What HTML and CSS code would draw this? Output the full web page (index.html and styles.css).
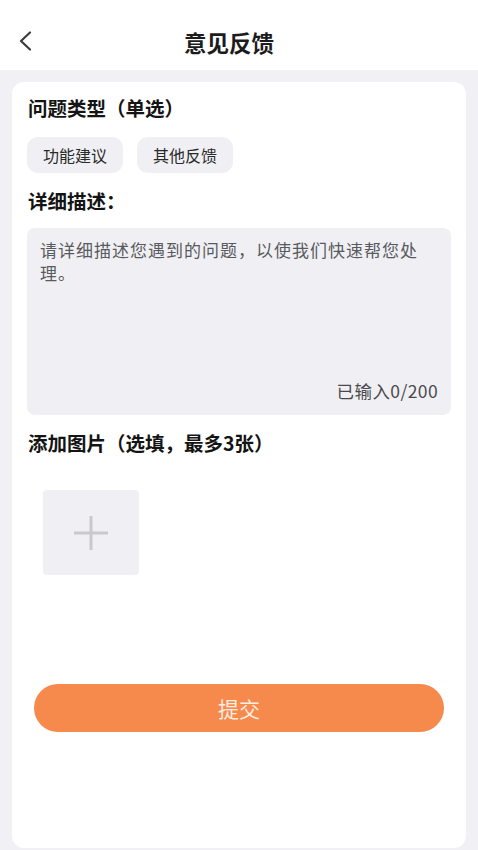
FILE: index.html
```html
<!DOCTYPE html>
<html lang="zh-CN">
<head>
<meta charset="utf-8">
<title>意见反馈</title>
<link rel="stylesheet" href="styles.css">
</head>
<body>
<header class="nav">
  <span class="back">
    <svg width="14" height="20" viewBox="0 0 14 20"><path d="M12 1.5 L3 10 L12 18.5" fill="none" stroke="#3c3c40" stroke-width="2.2" stroke-linecap="round" stroke-linejoin="round"/></svg>
  </span>
  <h1 class="nav-title">意见反馈</h1>
</header>
<main class="page">
  <section class="card">
    <h2 class="sec-title t1">问题类型（单选）</h2>
    <div class="chips">
      <span class="chip">功能建议</span>
      <span class="chip">其他反馈</span>
    </div>
    <h2 class="sec-title t2">详细描述：</h2>
    <div class="textbox">
      <p class="placeholder">请详细描述您遇到的问题，以使我们快速帮您处理。</p>
      <p class="counter">已输入0/200</p>
    </div>
    <h2 class="sec-title t3">添加图片（选填，最多3张）</h2>
    <div class="upload">
      <svg width="38" height="38" viewBox="0 0 38 38"><path d="M19 2 V36 M2 19 H36" stroke="#c9c9cd" stroke-width="3"/></svg>
    </div>
    <button class="submit">提交</button>
  </section>
</main>
</body>
</html>
```
FILE: styles.css
```css
* { box-sizing: border-box; }
html, body { margin: 0; padding: 0; }
body {
  width: 478px;
  height: 850px;
  overflow: hidden;
  background: #f1f1f5;
  font-family: "Noto Sans CJK SC", "Noto Sans", sans-serif;
  color: #1a1a1a;
}
.nav {
  height: 70px;
  background: #ffffff;
  display: flex;
  align-items: center;
  justify-content: center;
  position: relative;
  padding-top: 14px;
  padding-right: 20px;
}
.back {
  position: absolute;
  left: 18px;
  top: 31px;
  display: flex;
}
.nav-title {
  margin: 0;
  font-size: 22.5px;
  font-weight: 700;
  color: #1c1c1c;
  line-height: 30px;
}
.page {
  padding: 12px 12px 0;
}
.card {
  background: #ffffff;
  border-radius: 12px;
  height: 766px;
  padding: 14px 15px 0;
  display: flex;
  flex-direction: column;
  align-items: flex-start;
}
.sec-title {
  margin: 0 0 0 1px;
  font-size: 19.5px;
  font-weight: 700;
  line-height: 24px;
  color: #141414;
}
.chips {
  display: flex;
  gap: 14px;
  margin-top: 17px;
}
.chip {
  height: 36px;
  padding: 0 16px;
  border-radius: 11px;
  background: #f0f0f4;
  font-size: 16px;
  line-height: 36px;
  color: #2a2a2a;
}
.t2 { margin-top: 16px; }
.textbox {
  margin-top: 15px;
  width: 100%;
  height: 187px;
  background: #f0f0f4;
  border-radius: 8px;
  padding: 10px 15px 13px 13px;
  display: flex;
  flex-direction: column;
  justify-content: space-between;
}
.placeholder {
  margin: 0;
  font-size: 17px;
  letter-spacing: 1px;
  line-height: 23px;
  color: #5a5a5e;
}
.counter {
  margin: 0;
  align-self: flex-end;
  font-size: 17.5px;
  letter-spacing: 0.4px;
  line-height: 22px;
  color: #4a4a4e;
  margin-right: -2px;
}
.t3 { margin-top: 16px; }
.upload {
  margin: 35px 0 0 16px;
  width: 96px;
  height: 85px;
  background: #f0f0f4;
  border-radius: 4px;
  display: flex;
  align-items: center;
  justify-content: center;
}
.submit {
  margin: 109px 7px 0;
  width: calc(100% - 14px);
  height: 48px;
  border: none;
  border-radius: 24px;
  background: #f6894c;
  color: #fdeee2;
  font-family: "Noto Sans CJK SC", "Noto Sans", sans-serif;
  font-size: 21px;
  line-height: 48px;
  padding: 0;
}
```
